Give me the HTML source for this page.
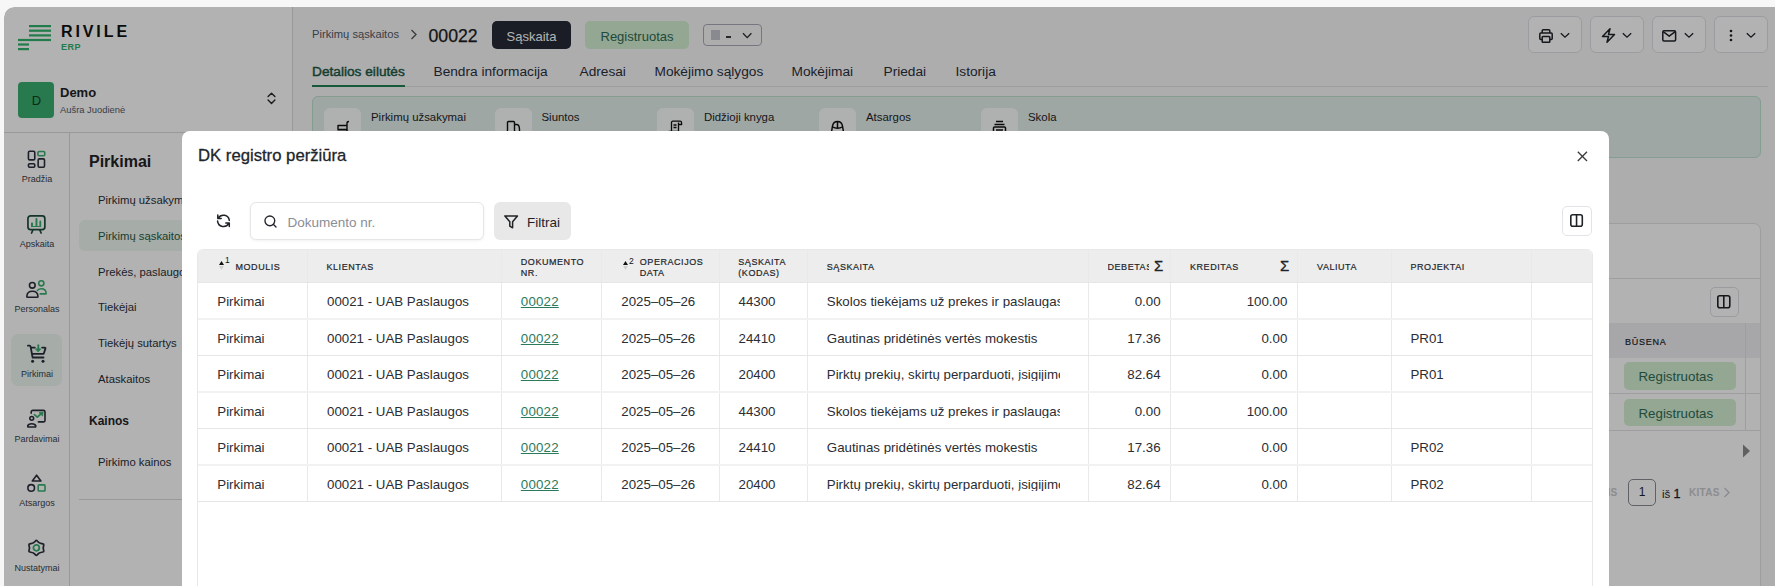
<!DOCTYPE html>
<html><head><meta charset="utf-8">
<style>
*{box-sizing:border-box}
html,body{margin:0;padding:0}
body{width:1775px;height:586px;position:relative;overflow:hidden;background:#f7f7f7;font-family:"Liberation Sans",sans-serif;color:#1f2328}
.a{position:absolute}
.t{position:absolute;white-space:nowrap;line-height:1}
svg{position:absolute;overflow:visible}
</style></head><body>

<!-- APP FRAME -->
<div class="a" style="left:4px;top:7px;width:1771px;height:579px;background:#f8f8fa;border-top-left-radius:10px;overflow:hidden" id="app">
  <!-- sidebar white -->
  <div class="a" style="left:0;top:0;width:288px;height:579px;background:#fff"></div>
  <div class="a" style="left:0;top:125px;width:288px;height:1px;background:#dcdcdc"></div>
  <div class="a" style="left:65px;top:125px;width:1px;height:460px;background:#dcdcdc"></div>
  <div class="a" style="left:288px;top:0;width:1px;height:579px;background:#dcdcdc"></div>
</div>

<!-- LOGO -->
<svg style="left:0;top:0" width="60" height="60">
  <g fill="#32b06a">
    <rect x="29" y="25" width="22" height="2.2"/>
    <rect x="29" y="29.6" width="22" height="2.2"/>
    <rect x="29" y="34.3" width="22" height="2.2"/>
    <rect x="18" y="38.9" width="33" height="2.2"/>
    <rect x="18" y="43.4" width="11" height="2.2"/>
    <rect x="18" y="48" width="11" height="2.2"/>
  </g>
</svg>
<div class="t" style="left:61px;top:23.5px;font-size:16px;font-weight:bold;letter-spacing:2.9px;color:#111">RIVILE</div>
<div class="t" style="left:61px;top:43px;font-size:9px;font-weight:bold;letter-spacing:0.5px;color:#32b06a">ERP</div>

<!-- DEMO -->
<div class="a" style="left:18px;top:82px;width:36px;height:36px;border-radius:4px;background:#3aae6f"></div>
<div class="t" style="left:18.5px;top:94px;width:36px;text-align:center;font-size:13px;color:#143d27">D</div>
<div class="t" style="left:60px;top:86px;font-size:13px;font-weight:bold;color:#1f2328">Demo</div>
<div class="t" style="left:60px;top:104.5px;font-size:9.4px;color:#555a66">Aušra Juodienė</div>
<svg style="left:265px;top:91px" width="14" height="16" fill="none" stroke="#2a2a2a" stroke-width="1.45" stroke-linecap="round" stroke-linejoin="round"><path d="M3.1 5.5 L6.5 2.2 L9.9 5.5 M3.1 9.1 L6.5 12.4 L9.9 9.1"/></svg>


<!-- RAIL -->
<div class="a" style="left:11px;top:334px;width:51px;height:52px;border-radius:7px;background:#eef7f1"></div>
<!-- Pradzia -->
<svg style="left:27px;top:150px" width="19" height="19" fill="none" stroke-width="1.6">
  <rect x="1.43" y="1.2" width="6.34" height="8.7" rx="1.2" stroke="#2a2f3a"/>
  <rect x="10.9" y="1.5" width="6.85" height="4.3" rx="1.2" stroke="#3aae6f"/>
  <rect x="1.43" y="13.8" width="6.34" height="3.5" rx="1.2" stroke="#2a2f3a"/>
  <rect x="11.16" y="8.9" width="6.34" height="8.4" rx="1.2" stroke="#2a2f3a"/>
</svg>
<div class="t" style="left:4px;width:66px;text-align:center;top:175px;font-size:9px;color:#3a3f4a">Pradžia</div>
<!-- Apskaita -->
<svg style="left:27px;top:215px" width="19" height="19" fill="none" stroke-width="1.7">
  <rect x="0.95" y="0.85" width="16.9" height="13.8" rx="2.6" stroke="#1e4d3b"/>
  <path d="M5.8 15.2 L4.6 18 M12.9 15.2 L14.1 18" stroke="#1e4d3b" stroke-linecap="round"/>
  <path d="M4 11.9 L4 8.6 C4 7.9 4.3 7.6 5 7.6 C5.7 7.6 6 7.9 6 8.6 L6 11 L8.5 11 L8.5 4 C8.5 3.3 8.8 3 9.45 3 C10.1 3 10.4 3.3 10.4 4 L10.4 11 L12.4 11 L12.4 6.6 C12.4 5.9 12.7 5.6 13.3 5.6 C13.9 5.6 14.2 5.9 14.2 6.6 L14.2 11.9 Z" fill="#3aae6f" stroke="none"/>
</svg>
<div class="t" style="left:4px;width:66px;text-align:center;top:240px;font-size:9px;color:#3a3f4a">Apskaita</div>
<!-- Personalas -->
<svg style="left:26px;top:280px" width="22" height="20" fill="none" stroke-width="1.6" stroke-linejoin="round" stroke-linecap="round">
  <circle cx="6.3" cy="5.3" r="2.85" stroke="#2a2f3a"/>
  <path d="M1.6 17.3 L11.2 17.3 C11.7 17.3 12 17 12 16.5 C11.8 13.3 9.4 11.3 6.4 11.3 C3.4 11.3 1 13.3 0.8 16.5 C0.8 17 1.1 17.3 1.6 17.3 Z" stroke="#2a2f3a"/>
  <circle cx="15.3" cy="3.3" r="2.6" stroke="#3aae6f"/>
  <path d="M11.4 10.4 C12.4 9.2 13.8 8.7 15.3 8.7 C18 8.7 20 10.6 20.2 13.2 C20.2 13.7 19.9 13.9 19.4 13.9 L14.2 13.9" stroke="#3aae6f"/>
</svg>
<div class="t" style="left:4px;width:66px;text-align:center;top:305px;font-size:9px;color:#3a3f4a">Personalas</div>
<!-- Pirkimai -->
<svg style="left:27px;top:344px" width="20" height="20" fill="none" stroke-width="1.8" stroke-linejoin="round" stroke-linecap="round">
  <path d="M0.9 1.7 L2.5 1.7 C3.1 1.7 3.5 2.1 3.6 2.7 L5.6 13.5 L16.5 13.5" stroke="#2a2f3a"/>
  <path d="M4.6 3.6 L7.8 3.6 M15.1 3.6 L17.7 3.6 C18.3 3.6 18.6 4 18.4 4.6 L16.9 9.3 C16.8 9.7 16.5 9.9 16.1 9.9 L5.2 9.9" stroke="#2a2f3a"/>
  <circle cx="5.6" cy="17.3" r="1.5" fill="#2a2f3a" stroke="none"/>
  <circle cx="16" cy="17.3" r="1.5" fill="#2a2f3a" stroke="none"/>
  <path d="M11.3 1.2 L11.3 5.5" stroke="#3aae6f" stroke-width="1.8"/>
  <path d="M8.9 4.9 L13.7 4.9 L11.3 7.6 Z" fill="#3aae6f" stroke="#3aae6f" stroke-width="1"/>
</svg>
<div class="t" style="left:4px;width:66px;text-align:center;top:370px;font-size:9px;color:#3a3f4a">Pirkimai</div>
<!-- Pardavimai -->
<svg style="left:27px;top:409px" width="20" height="20" fill="none" stroke-width="1.6">
  <path d="M4.2 4.2 L4.2 2.9 C4.2 2 4.9 1.4 5.8 1.4 L16.4 1.4 C17.3 1.4 18 2 18 2.9 L18 11.4 C18 12.3 17.3 12.9 16.4 12.9 L11.4 12.9" stroke="#2a2f3a" stroke-linecap="round"/>
  <circle cx="4.75" cy="9.35" r="1.9" stroke="#2a2f3a"/>
  <path d="M1.4 18 L8.1 18 C8.6 18 8.9 17.6 8.8 17 C8.4 15.4 6.8 14.8 4.75 14.8 C2.7 14.8 1.1 15.4 0.7 17 C0.6 17.6 0.9 18 1.4 18 Z" stroke="#2a2f3a"/>
  <path d="M7.4 5.6 L10.3 8.1 L13.8 5" stroke="#3aae6f" stroke-width="1.7" stroke-linecap="round" stroke-linejoin="round"/>
  <path d="M12 3.6 L16.1 3 L15.6 7 Z" fill="#3aae6f" stroke="#3aae6f" stroke-width="0.8" stroke-linejoin="round"/>
</svg>
<div class="t" style="left:4px;width:66px;text-align:center;top:435px;font-size:9px;color:#3a3f4a">Pardavimai</div>
<!-- Atsargos -->
<svg style="left:26px;top:473px" width="21" height="21" fill="none" stroke-width="1.6">
  <path d="M10.6 2.2 L14.9 8 L6.3 8 Z" stroke="#2a2f3a" stroke-linejoin="round"/>
  <circle cx="5.2" cy="14.95" r="3.3" stroke="#2a2f3a"/>
  <rect x="12.2" y="11.9" width="6.8" height="6.1" rx="0.8" stroke="#3aae6f"/>
</svg>
<div class="t" style="left:4px;width:66px;text-align:center;top:499px;font-size:9px;color:#3a3f4a">Atsargos</div>
<!-- Nustatymai -->
<svg style="left:27px;top:539px" width="19" height="19" fill="none" stroke-width="1.7" stroke-linejoin="round">
  <path d="M8.6 1.9 Q9.34 1 10.1 1.9 Q11.8 4.5 15.9 4.9 Q16.8 5 16.8 5.9 Q15.6 8.9 16.8 12 Q16.8 12.9 15.9 13 Q11.8 13.4 10.1 16 Q9.34 16.9 8.6 16 Q6.9 13.4 2.8 13 Q1.9 12.9 1.9 12 Q3.1 8.9 1.9 5.9 Q1.9 5 2.8 4.9 Q6.9 4.5 8.6 1.9 Z" stroke="#2a2f3a"/>
  <circle cx="9.34" cy="8.85" r="2.95" stroke="#3aae6f" stroke-width="1.8"/>
</svg>
<div class="t" style="left:4px;width:66px;text-align:center;top:564px;font-size:9px;color:#3a3f4a">Nustatymai</div>

<!-- SUBMENU -->
<div class="t" style="left:89px;top:154px;font-size:16px;font-weight:bold;color:#1f2328">Pirkimai</div>
<div class="a" style="left:79px;top:220px;width:200px;height:31px;border-radius:6px;background:#eef7f1"></div>
<div class="t" style="left:98px;top:195px;font-size:11.3px;color:#2a2f3a">Pirkimų užsakymai</div>
<div class="t" style="left:98px;top:231px;font-size:11.3px;color:#1e5a45">Pirkimų sąskaitos</div>
<div class="t" style="left:98px;top:267px;font-size:11.3px;color:#2a2f3a">Prekės, paslaugos</div>
<div class="t" style="left:98px;top:302px;font-size:11.3px;color:#2a2f3a">Tiekėjai</div>
<div class="t" style="left:98px;top:338px;font-size:11.3px;color:#2a2f3a">Tiekėjų sutartys</div>
<div class="t" style="left:98px;top:374px;font-size:11.3px;color:#2a2f3a">Ataskaitos</div>
<div class="t" style="left:89px;top:415px;font-size:12px;font-weight:bold;color:#1f2328">Kainos</div>
<div class="t" style="left:98px;top:457px;font-size:11.3px;color:#2a2f3a">Pirkimo kainos</div>
<div class="a" style="left:79px;top:499px;width:210px;height:1px;background:#dcdcdc"></div>


<!-- MAIN HEADER -->
<div class="t" style="left:312px;top:29.3px;font-size:11.2px;color:#555a66">Pirkimų sąskaitos</div>
<svg style="left:408.7px;top:28.3px" width="10" height="14" fill="none" stroke="#555" stroke-width="1.3"><path d="M2.5 2 L7 6.5 L2.5 11"/></svg>
<div class="t" style="left:428.5px;top:27.5px;font-size:17.7px;color:#1a1d24;-webkit-text-stroke:0.25px #1a1d24">00022</div>
<div class="a" style="left:492px;top:21px;width:79px;height:28px;border-radius:5px;background:#262a36"></div>
<div class="t" style="left:492px;width:79px;text-align:center;top:30px;font-size:13px;color:#fff">Sąskaita</div>
<div class="a" style="left:585px;top:21px;width:104px;height:28px;border-radius:5px;background:#d3efd3"></div>
<div class="t" style="left:585px;width:104px;text-align:center;top:30px;font-size:13px;color:#2e6b55">Registruotas</div>
<div class="a" style="left:703px;top:24px;width:59px;height:22px;border-radius:4px;border:1px solid #aaaab8;background:#f8f8fa"></div>
<div class="a" style="left:711px;top:30px;width:9px;height:10px;background:#c4c4cf"></div>
<div class="a" style="left:726px;top:36px;width:5px;height:1.6px;background:#3a3a3a"></div>
<svg style="left:741.5px;top:32px" width="12" height="8" fill="none" stroke="#2a2a2a" stroke-width="1.3"><path d="M1 1.3 L5.2 5.6 L9.4 1.3"/></svg>

<!-- toolbar buttons -->
<div class="a" style="left:1528px;top:16px;width:53.5px;height:37px;border-radius:6px;border:1px solid #dfe0e6;background:#fff"></div>
<div class="a" style="left:1590px;top:16px;width:53.5px;height:37px;border-radius:6px;border:1px solid #dfe0e6;background:#fff"></div>
<div class="a" style="left:1652px;top:16px;width:53.5px;height:37px;border-radius:6px;border:1px solid #dfe0e6;background:#fff"></div>
<div class="a" style="left:1714px;top:16px;width:53.5px;height:37px;border-radius:6px;border:1px solid #dfe0e6;background:#fff"></div>
<svg style="left:1538.5px;top:28.5px" width="14" height="14" fill="none" stroke="#1f2328" stroke-width="1.5" stroke-linejoin="round">
  <path d="M3.2 4 L3.2 1.8 C3.2 1.2 3.6 0.8 4.2 0.8 L9.8 0.8 C10.4 0.8 10.8 1.2 10.8 1.8 L10.8 4"/>
  <path d="M3.2 10.5 L1.8 10.5 C1.2 10.5 0.8 10.1 0.8 9.5 L0.8 5 C0.8 4.4 1.2 4 1.8 4 L12.2 4 C12.8 4 13.2 4.4 13.2 5 L13.2 9.5 C13.2 10.1 12.8 10.5 12.2 10.5 L10.8 10.5"/>
  <rect x="3.2" y="7.5" width="7.6" height="5.7" rx="0.8"/>
</svg>
<svg style="left:1559.5px;top:31.5px" width="10" height="7" fill="none" stroke="#1f2328" stroke-width="1.3"><path d="M0.8 1.2 L5 5.2 L9.2 1.2"/></svg>
<svg style="left:1601px;top:28px" width="15" height="15" fill="none" stroke="#1f2328" stroke-width="1.5" stroke-linejoin="round"><path d="M9 0.8 L1.5 8.5 L7.5 8.5 L6 14.2 L13.5 6.5 L7.5 6.5 Z"/></svg>
<svg style="left:1621.5px;top:31.5px" width="10" height="7" fill="none" stroke="#1f2328" stroke-width="1.3"><path d="M0.8 1.2 L5 5.2 L9.2 1.2"/></svg>
<svg style="left:1662.3px;top:30px" width="15" height="12" fill="none" stroke="#1f2328" stroke-width="1.5" stroke-linejoin="round"><rect x="0.8" y="0.8" width="12.8" height="10.2" rx="1.2"/><path d="M1.2 1.6 L7.2 6.2 L13.2 1.6"/></svg>
<svg style="left:1683.5px;top:31.5px" width="10" height="7" fill="none" stroke="#1f2328" stroke-width="1.3"><path d="M0.8 1.2 L5 5.2 L9.2 1.2"/></svg>
<svg style="left:1728px;top:29px" width="6" height="14" fill="#1f2328"><circle cx="3" cy="2" r="1.3"/><circle cx="3" cy="6.5" r="1.3"/><circle cx="3" cy="11" r="1.3"/></svg>
<svg style="left:1745.5px;top:31.5px" width="10" height="7" fill="none" stroke="#1f2328" stroke-width="1.3"><path d="M0.8 1.2 L5 5.2 L9.2 1.2"/></svg>

<!-- TABS -->
<div class="t" style="left:312px;top:65px;font-size:13.7px;color:#1e5a45;-webkit-text-stroke:0.45px #1e5a45">Detalios eilutės</div>
<div class="t" style="left:433.5px;top:65px;font-size:13.7px;color:#2a2f3a">Bendra informacija</div>
<div class="t" style="left:579.5px;top:65px;font-size:13.7px;color:#2a2f3a">Adresai</div>
<div class="t" style="left:654.5px;top:65px;font-size:13.7px;color:#2a2f3a">Mokėjimo sąlygos</div>
<div class="t" style="left:791.5px;top:65px;font-size:13.7px;color:#2a2f3a">Mokėjimai</div>
<div class="t" style="left:883.5px;top:65px;font-size:13.7px;color:#2a2f3a">Priedai</div>
<div class="t" style="left:955.5px;top:65px;font-size:13.7px;color:#2a2f3a">Istorija</div>
<div class="a" style="left:312px;top:86px;width:1456px;height:1px;background:#e3e3e6"></div>
<div class="a" style="left:312px;top:85px;width:93px;height:2px;background:#258055"></div>

<!-- RELATION PANEL -->
<div class="a" style="left:312px;top:96px;width:1449px;height:62px;border-radius:6px;border:1px solid #bfe0d0;background:#e2efea"></div>
<div class="a" style="left:324px;top:108px;width:37px;height:40px;border-radius:6px;background:#fbfcfc"></div>
<div class="t" style="left:371px;top:112px;font-size:11.4px;color:#1f2328">Pirkimų užsakymai</div>
<div class="a" style="left:495px;top:108px;width:37px;height:40px;border-radius:6px;background:#fbfcfc"></div>
<div class="t" style="left:541.5px;top:112px;font-size:11.4px;color:#1f2328">Siuntos</div>
<div class="a" style="left:657px;top:108px;width:37px;height:40px;border-radius:6px;background:#fbfcfc"></div>
<div class="t" style="left:704px;top:112px;font-size:11.4px;color:#1f2328">Didžioji knyga</div>
<div class="a" style="left:819px;top:108px;width:37px;height:40px;border-radius:6px;background:#fbfcfc"></div>
<div class="t" style="left:866px;top:112px;font-size:11.4px;color:#1f2328">Atsargos</div>
<div class="a" style="left:981px;top:108px;width:37px;height:40px;border-radius:6px;background:#fbfcfc"></div>
<div class="t" style="left:1028px;top:112px;font-size:11.4px;color:#1f2328">Skola</div>
<svg style="left:336px;top:120px" width="14" height="14" fill="none" stroke="#111" stroke-width="1.4" stroke-linejoin="round"><path d="M13 1.5 C11.5 1.5 11 2 11 3 L11 11.5 M2 5 L2 9.5 L11 9.5 M2 5.5 L11 5.5 M1 11.5 L12.5 11.5"/></svg>
<svg style="left:506px;top:120px" width="15" height="14" fill="none" stroke="#111" stroke-width="1.4" stroke-linejoin="round"><path d="M1.5 12 L1.5 2.5 C1.5 2 2 1.5 2.5 1.5 L7.5 1.5 C8 1.5 8.5 2 8.5 2.5 L8.5 12 M8.5 4.5 L10.5 4.5 C12.5 4.5 13.5 7 13.5 9.5 L13.5 12"/></svg>
<svg style="left:668px;top:120px" width="15" height="14" fill="none" stroke="#111" stroke-width="1.3" stroke-linejoin="round"><path d="M3.5 11.5 L3.5 2.5 C3.5 1.8 4 1.2 4.8 1.2 L12 1.2 C13 1.2 13.6 2 13.6 3 L13.6 4.5 L10.5 4.5 M10.5 2.5 L10.5 11.5 M0.5 11.5 L10.5 11.5 M5.5 5 L8.5 5 M5.5 7.5 L8.5 7.5"/></svg>
<svg style="left:830px;top:120px" width="15" height="14" fill="none" stroke="#111" stroke-width="1.5" stroke-linejoin="round"><path d="M1.5 12 L2.5 6 C3 3 5 1.5 7.5 1.5 C10 1.5 12 3 12.5 6 L13.5 12 M3 7 C5 8.5 10 8.5 12 7 M7.5 1.5 L7.5 8"/></svg>
<svg style="left:992px;top:120px" width="15" height="14" fill="none" stroke="#111" stroke-width="1.5" stroke-linejoin="round"><path d="M4 1.5 L11 1.5 M2.5 4.5 L12.5 4.5 M1.5 12 L1.5 8 C1.5 7.5 2 7 2.5 7 L12.5 7 C13 7 13.5 7.5 13.5 8 L13.5 12 M4 10 L11 10"/></svg>

<!-- RIGHT CARD -->
<div class="a" style="left:312px;top:223px;width:1449px;height:400px;border-radius:7px;border:1px solid #e3e3e6;background:#fff"></div>
<div class="a" style="left:313px;top:278px;width:1447px;height:1px;background:#e3e3e6"></div>
<div class="a" style="left:1709.5px;top:287px;width:29.5px;height:29.5px;border-radius:5px;border:1px solid #dfe0e6;background:#fff"></div>
<svg style="left:1717px;top:295px" width="14" height="14" fill="none" stroke="#1f2328" stroke-width="1.6"><rect x="0.8" y="0.8" width="12" height="12" rx="2"/><path d="M6.8 0.8 L6.8 12.8"/></svg>
<div class="a" style="left:313px;top:323px;width:1447px;height:35px;background:#f0f0f2"></div>
<div class="t" style="left:1625px;top:337.5px;font-size:9px;letter-spacing:0.75px;color:#22252b;-webkit-text-stroke:0.2px #22252b">BŪSENA</div>
<div class="a" style="left:1745px;top:323px;width:1px;height:107px;background:#e3e3e6"></div>
<div class="a" style="left:313px;top:393px;width:1447px;height:1px;background:#e3e3e6"></div>
<div class="a" style="left:313px;top:430px;width:1447px;height:1px;background:#e3e3e6"></div>
<div class="a" style="left:1624px;top:362px;width:112px;height:27.5px;border-radius:5px;background:#d3efd3"></div>
<div class="t" style="left:1638.5px;top:370px;font-size:13.3px;color:#2e6b55">Registruotas</div>
<div class="a" style="left:1624px;top:398.5px;width:112px;height:27.5px;border-radius:5px;background:#d3efd3"></div>
<div class="t" style="left:1638.5px;top:407px;font-size:13.3px;color:#2e6b55">Registruotas</div>
<svg style="left:1742px;top:443.5px" width="9" height="14" fill="#8a8a8a"><path d="M1 0.5 L8 7 L1 13.5 Z"/></svg>
<div class="t" style="left:1607.5px;top:488px;font-size:10px;font-weight:bold;letter-spacing:0.3px;color:#c9c9ce">IS</div>
<div class="a" style="left:1628px;top:479px;width:28px;height:27px;border-radius:5px;border:1px solid #8a8a96;background:#fff"></div>
<div class="t" style="left:1628px;width:28px;text-align:center;top:486px;font-size:12px;color:#1f2328">1</div>
<div class="t" style="left:1662px;top:488px;font-size:11.5px;color:#1f2328">iš <span style="font-size:12.5px;-webkit-text-stroke:0.3px #1f2328">1</span></div>
<div class="t" style="left:1689px;top:488px;font-size:10px;font-weight:bold;letter-spacing:0.3px;color:#c9c9ce">KITAS</div>
<svg style="left:1723px;top:487px" width="8" height="11" fill="none" stroke="#c9c9ce" stroke-width="1.4"><path d="M1.5 1 L6 5.5 L1.5 10"/></svg>

<!-- OVERLAY -->
<div class="a" style="left:4px;top:7px;width:1771px;height:579px;border-top-left-radius:10px;background:rgba(0,0,0,0.3)"></div>
<svg style="left:0;top:0" width="20" height="20"><path d="M0 0 H20 V7 H14 A10 10 0 0 0 4 17 V20 H0 Z" fill="#f7f7f7"/></svg>














<!-- MODAL -->
<div class="a" style="left:182px;top:131px;width:1427px;height:500px;border-radius:8px;background:#fff"></div>
<div class="t" style="left:198px;top:147.86px;font-size:16.7px;color:#22252b;-webkit-text-stroke:0.3px #22252b">DK registro peržiūra</div>
<svg style="left:1577px;top:151px" width="11" height="11" fill="none" stroke="#3a3a3a" stroke-width="1.3"><path d="M0.8 0.8 L10 10 M10 0.8 L0.8 10"/></svg>
<svg style="left:216px;top:213.5px" width="15" height="14" fill="none" stroke="#1f2328" stroke-width="1.5" stroke-linecap="round" stroke-linejoin="round"><path d="M13.3 6.4 A5.9 5.9 0 0 0 2.3 4.2 M1.8 1 L1.8 4.6 L5.2 4.6"/><path d="M1.6 7.1 A5.9 5.9 0 0 0 12.7 9.4 M13.3 12.6 L13.3 9 L9.8 9"/></svg>
<div class="a" style="left:250px;top:202px;width:233.5px;height:37.5px;border-radius:6px;border:1px solid #e6e6e9;background:#fff;box-shadow:0 1px 3px rgba(0,0,0,0.06)"></div>
<svg style="left:264px;top:215px" width="14" height="14" fill="none" stroke="#22252b" stroke-width="1.35" stroke-linecap="round"><circle cx="5.85" cy="5.85" r="4.9"/><path d="M9.5 9.5 L12 12"/></svg>
<div class="t" style="left:287.5px;top:215.57px;font-size:13.5px;color:#8a8d95">Dokumento nr.</div>
<div class="a" style="left:494px;top:202px;width:77px;height:37.5px;border-radius:6px;background:#e8e8e8"></div>
<svg style="left:504px;top:214.5px" width="15" height="14" fill="none" stroke="#1f2328" stroke-width="1.5" stroke-linejoin="round"><path d="M0.9 0.9 L13.5 0.9 L8.6 6.8 L8.6 12.8 L5.8 11.2 L5.8 6.8 Z"/></svg>
<div class="t" style="left:527px;top:215.57px;font-size:13.5px;color:#1f2328">Filtrai</div>
<div class="a" style="left:1562px;top:206px;width:29.5px;height:29.5px;border-radius:5px;border:1px solid #e2e4ea;background:#fff"></div>
<svg style="left:1570px;top:214px" width="14" height="14" fill="none" stroke="#1f2328" stroke-width="1.6"><rect x="0.8" y="0.8" width="11.5" height="11.5" rx="2"/><path d="M6.55 0.8 L6.55 12.3"/></svg>
<div class="a" style="left:197px;top:249px;width:1396px;height:400px;border-radius:6px;border:1px solid #e8e8e8;background:#fff;overflow:hidden">
<div class="a" style="left:0;top:0;width:100%;height:32px;background:#ededed"></div>
</div>
<div class="a" style="left:307px;top:250px;width:1px;height:252px;background:#e9e9e9"></div>
<div class="a" style="left:501px;top:250px;width:1px;height:252px;background:#e9e9e9"></div>
<div class="a" style="left:601px;top:250px;width:1px;height:252px;background:#e9e9e9"></div>
<div class="a" style="left:719px;top:250px;width:1px;height:252px;background:#e9e9e9"></div>
<div class="a" style="left:807px;top:250px;width:1px;height:252px;background:#e9e9e9"></div>
<div class="a" style="left:1088px;top:250px;width:1px;height:252px;background:#e9e9e9"></div>
<div class="a" style="left:1170px;top:250px;width:1px;height:252px;background:#e9e9e9"></div>
<div class="a" style="left:1297px;top:250px;width:1px;height:252px;background:#e9e9e9"></div>
<div class="a" style="left:1391px;top:250px;width:1px;height:252px;background:#e9e9e9"></div>
<div class="a" style="left:1531px;top:250px;width:1px;height:252px;background:#e9e9e9"></div>
<div class="a" style="left:198px;top:282px;width:1394px;height:1px;background:#e6e6e6"></div>
<div class="a" style="left:198px;top:318px;width:1394px;height:2px;background:#f2f2f2"></div>
<div class="a" style="left:198px;top:355px;width:1394px;height:1px;background:#e6e6e6"></div>
<div class="a" style="left:198px;top:391px;width:1394px;height:2px;background:#f2f2f2"></div>
<div class="a" style="left:198px;top:428px;width:1394px;height:1px;background:#e6e6e6"></div>
<div class="a" style="left:198px;top:464px;width:1394px;height:2px;background:#f2f2f2"></div>
<div class="a" style="left:198px;top:501px;width:1394px;height:1px;background:#e6e6e6"></div>
<div class="t" style="left:235.5px;top:262.88px;font-size:9px;letter-spacing:0.55px;color:#22252b;-webkit-text-stroke:0.2px #22252b">MODULIS</div>
<div class="t" style="left:326.5px;top:262.88px;font-size:9px;letter-spacing:0.55px;color:#22252b;-webkit-text-stroke:0.2px #22252b">KLIENTAS</div>
<div class="t" style="left:520.8px;top:257.88px;font-size:9px;letter-spacing:0.55px;color:#22252b;-webkit-text-stroke:0.2px #22252b">DOKUMENTO</div>
<div class="t" style="left:520.8px;top:268.88px;font-size:9px;letter-spacing:0.55px;color:#22252b;-webkit-text-stroke:0.2px #22252b">NR.</div>
<div class="t" style="left:639.8px;top:257.88px;font-size:9px;letter-spacing:0.55px;color:#22252b;-webkit-text-stroke:0.2px #22252b">OPERACIJOS</div>
<div class="t" style="left:639.8px;top:268.88px;font-size:9px;letter-spacing:0.55px;color:#22252b;-webkit-text-stroke:0.2px #22252b">DATA</div>
<div class="t" style="left:738.3px;top:257.88px;font-size:9px;letter-spacing:0.55px;color:#22252b;-webkit-text-stroke:0.2px #22252b">SĄSKAITA</div>
<div class="t" style="left:738.3px;top:268.88px;font-size:9px;letter-spacing:0.55px;color:#22252b;-webkit-text-stroke:0.2px #22252b">(KODAS)</div>
<div class="t" style="left:826.8px;top:262.88px;font-size:9px;letter-spacing:0.55px;color:#22252b;-webkit-text-stroke:0.2px #22252b">SĄSKAITA</div>
<div class="t" style="left:1107.5px;top:262.88px;font-size:9px;letter-spacing:0.55px;color:#22252b;-webkit-text-stroke:0.2px #22252b;width:41.5px;overflow:hidden">DEBETAS</div>
<div class="t" style="left:1190px;top:262.88px;font-size:9px;letter-spacing:0.55px;color:#22252b;-webkit-text-stroke:0.2px #22252b">KREDITAS</div>
<div class="t" style="left:1317px;top:262.88px;font-size:9px;letter-spacing:0.55px;color:#22252b;-webkit-text-stroke:0.2px #22252b">VALIUTA</div>
<div class="t" style="left:1410.5px;top:262.88px;font-size:9px;letter-spacing:0.55px;color:#22252b;-webkit-text-stroke:0.2px #22252b">PROJEKTAI</div>
<svg style="left:219px;top:260.7px" width="6" height="10"><path d="M0 4 L2.5 0 L5 4 Z" fill="#111"/><path d="M0 5 L2.5 9 L5 5 Z" fill="#d0d0d0"/></svg>
<div class="t" style="left:225px;top:256.4px;font-size:8.5px;color:#111">1</div>
<svg style="left:623px;top:260.8px" width="6" height="10"><path d="M0 4 L2.5 0 L5 4 Z" fill="#111"/><path d="M0 5 L2.5 9 L5 5 Z" fill="#d0d0d0"/></svg>
<div class="t" style="left:629px;top:256.5px;font-size:8.5px;color:#111">2</div>
<div class="t" style="left:1154px;top:258.3px;font-size:15px;color:#1f2328;-webkit-text-stroke:0.3px #1f2328">Σ</div>
<div class="t" style="left:1280px;top:258.3px;font-size:15px;color:#1f2328;-webkit-text-stroke:0.3px #1f2328">Σ</div>
<div class="t" style="left:217.3px;top:295.04px;font-size:13.3px;color:#2a2d33">Pirkimai</div>
<div class="t" style="left:327px;top:295.04px;font-size:13.3px;color:#2a2d33">00021 - UAB Paslaugos</div>
<div class="t" style="left:520.8px;top:295.04px;font-size:13.3px;color:#2a2d33;color:#2b7a5c;text-decoration:underline;text-underline-offset:1px;letter-spacing:0.2px">00022</div>
<div class="t" style="left:621.3px;top:295.04px;font-size:13.3px;color:#2a2d33">2025–05–26</div>
<div class="t" style="left:738.5px;top:295.04px;font-size:13.3px;color:#2a2d33">44300</div>
<div class="t" style="left:826.8px;top:295.04px;width:233px;overflow:hidden;font-size:13.3px;color:#2a2d33">Skolos tiekėjams už prekes ir paslaugas</div>
<div class="t" style="left:1080px;width:80.6px;text-align:right;top:295.04px;font-size:13.3px;color:#2a2d33">0.00</div>
<div class="t" style="left:1200px;width:87.3px;text-align:right;top:295.04px;font-size:13.3px;color:#2a2d33">100.00</div>
<div class="t" style="left:217.3px;top:331.54px;font-size:13.3px;color:#2a2d33">Pirkimai</div>
<div class="t" style="left:327px;top:331.54px;font-size:13.3px;color:#2a2d33">00021 - UAB Paslaugos</div>
<div class="t" style="left:520.8px;top:331.54px;font-size:13.3px;color:#2a2d33;color:#2b7a5c;text-decoration:underline;text-underline-offset:1px;letter-spacing:0.2px">00022</div>
<div class="t" style="left:621.3px;top:331.54px;font-size:13.3px;color:#2a2d33">2025–05–26</div>
<div class="t" style="left:738.5px;top:331.54px;font-size:13.3px;color:#2a2d33">24410</div>
<div class="t" style="left:826.8px;top:331.54px;width:233px;overflow:hidden;font-size:13.3px;color:#2a2d33">Gautinas pridėtinės vertės mokestis</div>
<div class="t" style="left:1080px;width:80.6px;text-align:right;top:331.54px;font-size:13.3px;color:#2a2d33">17.36</div>
<div class="t" style="left:1200px;width:87.3px;text-align:right;top:331.54px;font-size:13.3px;color:#2a2d33">0.00</div>
<div class="t" style="left:1410.5px;top:331.54px;font-size:13.3px;color:#2a2d33">PR01</div>
<div class="t" style="left:217.3px;top:368.04px;font-size:13.3px;color:#2a2d33">Pirkimai</div>
<div class="t" style="left:327px;top:368.04px;font-size:13.3px;color:#2a2d33">00021 - UAB Paslaugos</div>
<div class="t" style="left:520.8px;top:368.04px;font-size:13.3px;color:#2a2d33;color:#2b7a5c;text-decoration:underline;text-underline-offset:1px;letter-spacing:0.2px">00022</div>
<div class="t" style="left:621.3px;top:368.04px;font-size:13.3px;color:#2a2d33">2025–05–26</div>
<div class="t" style="left:738.5px;top:368.04px;font-size:13.3px;color:#2a2d33">20400</div>
<div class="t" style="left:826.8px;top:368.04px;width:233px;overflow:hidden;font-size:13.3px;color:#2a2d33">Pirktų prekių, skirtų perparduoti, įsigijimo savikaina</div>
<div class="t" style="left:1080px;width:80.6px;text-align:right;top:368.04px;font-size:13.3px;color:#2a2d33">82.64</div>
<div class="t" style="left:1200px;width:87.3px;text-align:right;top:368.04px;font-size:13.3px;color:#2a2d33">0.00</div>
<div class="t" style="left:1410.5px;top:368.04px;font-size:13.3px;color:#2a2d33">PR01</div>
<div class="t" style="left:217.3px;top:404.54px;font-size:13.3px;color:#2a2d33">Pirkimai</div>
<div class="t" style="left:327px;top:404.54px;font-size:13.3px;color:#2a2d33">00021 - UAB Paslaugos</div>
<div class="t" style="left:520.8px;top:404.54px;font-size:13.3px;color:#2a2d33;color:#2b7a5c;text-decoration:underline;text-underline-offset:1px;letter-spacing:0.2px">00022</div>
<div class="t" style="left:621.3px;top:404.54px;font-size:13.3px;color:#2a2d33">2025–05–26</div>
<div class="t" style="left:738.5px;top:404.54px;font-size:13.3px;color:#2a2d33">44300</div>
<div class="t" style="left:826.8px;top:404.54px;width:233px;overflow:hidden;font-size:13.3px;color:#2a2d33">Skolos tiekėjams už prekes ir paslaugas</div>
<div class="t" style="left:1080px;width:80.6px;text-align:right;top:404.54px;font-size:13.3px;color:#2a2d33">0.00</div>
<div class="t" style="left:1200px;width:87.3px;text-align:right;top:404.54px;font-size:13.3px;color:#2a2d33">100.00</div>
<div class="t" style="left:217.3px;top:441.04px;font-size:13.3px;color:#2a2d33">Pirkimai</div>
<div class="t" style="left:327px;top:441.04px;font-size:13.3px;color:#2a2d33">00021 - UAB Paslaugos</div>
<div class="t" style="left:520.8px;top:441.04px;font-size:13.3px;color:#2a2d33;color:#2b7a5c;text-decoration:underline;text-underline-offset:1px;letter-spacing:0.2px">00022</div>
<div class="t" style="left:621.3px;top:441.04px;font-size:13.3px;color:#2a2d33">2025–05–26</div>
<div class="t" style="left:738.5px;top:441.04px;font-size:13.3px;color:#2a2d33">24410</div>
<div class="t" style="left:826.8px;top:441.04px;width:233px;overflow:hidden;font-size:13.3px;color:#2a2d33">Gautinas pridėtinės vertės mokestis</div>
<div class="t" style="left:1080px;width:80.6px;text-align:right;top:441.04px;font-size:13.3px;color:#2a2d33">17.36</div>
<div class="t" style="left:1200px;width:87.3px;text-align:right;top:441.04px;font-size:13.3px;color:#2a2d33">0.00</div>
<div class="t" style="left:1410.5px;top:441.04px;font-size:13.3px;color:#2a2d33">PR02</div>
<div class="t" style="left:217.3px;top:477.54px;font-size:13.3px;color:#2a2d33">Pirkimai</div>
<div class="t" style="left:327px;top:477.54px;font-size:13.3px;color:#2a2d33">00021 - UAB Paslaugos</div>
<div class="t" style="left:520.8px;top:477.54px;font-size:13.3px;color:#2a2d33;color:#2b7a5c;text-decoration:underline;text-underline-offset:1px;letter-spacing:0.2px">00022</div>
<div class="t" style="left:621.3px;top:477.54px;font-size:13.3px;color:#2a2d33">2025–05–26</div>
<div class="t" style="left:738.5px;top:477.54px;font-size:13.3px;color:#2a2d33">20400</div>
<div class="t" style="left:826.8px;top:477.54px;width:233px;overflow:hidden;font-size:13.3px;color:#2a2d33">Pirktų prekių, skirtų perparduoti, įsigijimo savikaina</div>
<div class="t" style="left:1080px;width:80.6px;text-align:right;top:477.54px;font-size:13.3px;color:#2a2d33">82.64</div>
<div class="t" style="left:1200px;width:87.3px;text-align:right;top:477.54px;font-size:13.3px;color:#2a2d33">0.00</div>
<div class="t" style="left:1410.5px;top:477.54px;font-size:13.3px;color:#2a2d33">PR02</div>
<!-- /MODAL -->
</body></html>
